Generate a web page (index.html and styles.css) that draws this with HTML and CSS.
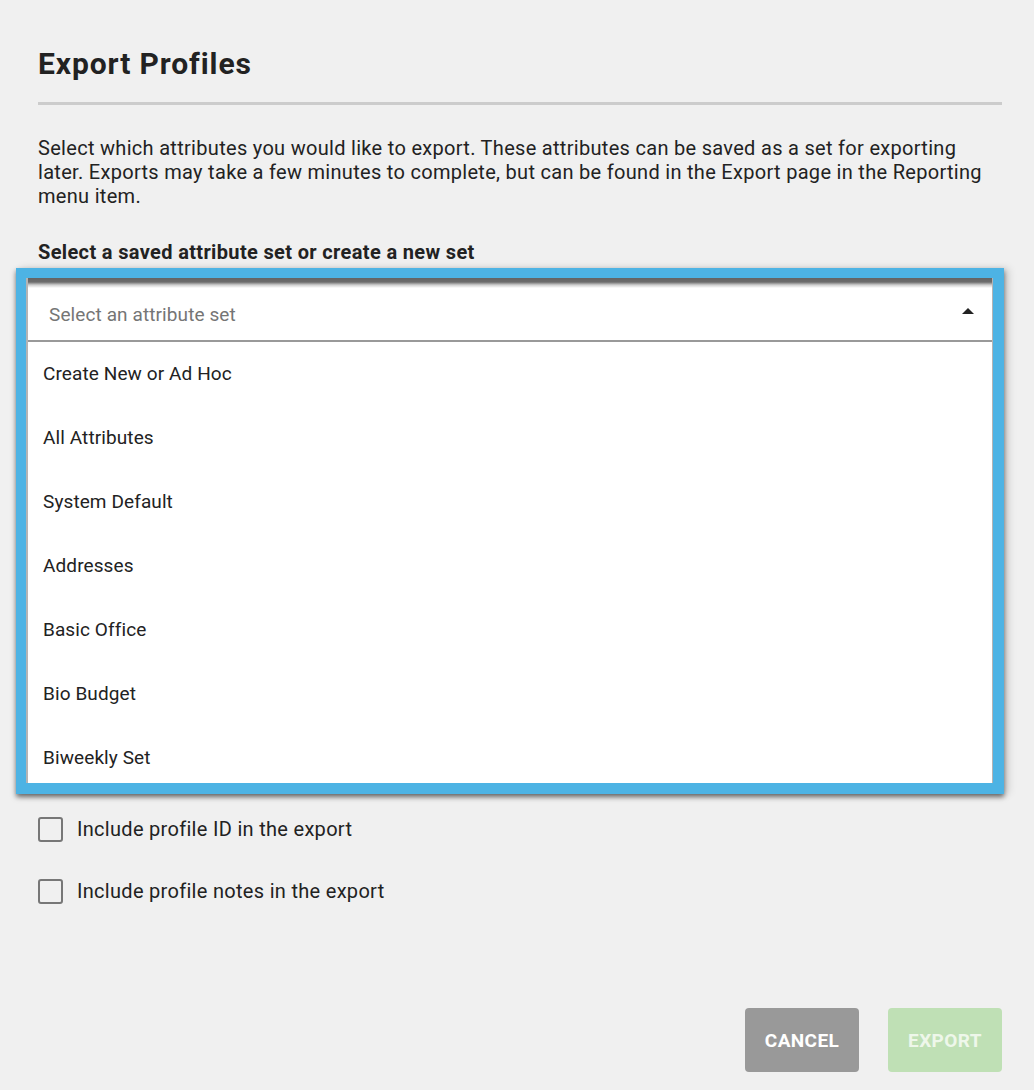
FILE: index.html
```html
<!DOCTYPE html>
<html>
<head>
  <meta charset="UTF-8">
  <title>Export Profiles</title>
  <link rel="stylesheet" href="styles.css">
</head>
<body>
<div class="dialog">
  <h1 class="title">Export Profiles</h1>
  <hr class="rule">
  <p class="intro">Select which attributes you would like to export. These attributes can be saved as a set for exporting later. Exports may take a few minutes to complete, but can be found in the Export page in the Reporting menu item.</p>
  <div class="field-label">Select a saved attribute set or create a new set</div>

  <div class="highlight">
    <div class="picker">
      <div class="picker-input">
        <span class="placeholder">Select an attribute set</span>
        <span class="caret"></span>
      </div>
      <ul class="menu">
        <li>Create New or Ad Hoc</li>
        <li>All Attributes</li>
        <li>System Default</li>
        <li>Addresses</li>
        <li>Basic Office</li>
        <li>Bio Budget</li>
        <li>Biweekly Set</li>
      </ul>
    </div>
  </div>

  <div class="options">
    <label class="check"><span class="box"></span>Include profile ID in the export</label>
    <label class="check"><span class="box"></span>Include profile notes in the export</label>
  </div>

  <div class="actions">
    <button type="button" class="btn btn-cancel">CANCEL</button>
    <button type="button" class="btn btn-export">EXPORT</button>
  </div>
</div>
</body>
</html>
```

FILE: styles.css
```css
body {
  margin: 0;
  background: #f0f0f0;
  font-family: Roboto, "Liberation Sans", sans-serif;
  color: #222;
}

.dialog {
  padding: 46px 32px 0 38px;
}

.title {
  margin: 0;
  font-size: 30px;
  line-height: 36px;
  font-weight: 700;
  letter-spacing: .9px;
}

.rule {
  margin: 20px 0 0 0;
  border: 0;
  height: 3px;
  background: #cccccc;
}

.intro {
  margin: 31px 0 0 0;
  font-size: 20px;
  line-height: 24px;
  letter-spacing: .3px;
}

.field-label {
  margin-top: 32px;
  font-size: 20px;
  line-height: 24px;
  font-weight: 700;
  letter-spacing: .35px;
}

/* the opened dropdown, outlined in blue */
.highlight {
  margin: 4px -2px 0 -22px;
  border-style: solid;
  border-color: #4db3e4;
  border-width: 10px 11px 11px 10px;
  box-shadow: 0 3px 5px rgba(0, 0, 0, .55), 5px 0 8px rgba(0, 0, 0, .12);
}

.picker {
  height: 505px;
  overflow: hidden;
  background: #fff;
  border-left: 2px solid #b4b4b4;
  border-right: 1px solid #b4b4b4;
}

.picker-input {
  position: relative;
  height: 62px;
  padding-left: 21px;
  display: flex;
  align-items: center;
  border-bottom: 2px solid #999;
  background: linear-gradient(to bottom, #646464 0, #6c6c6c 4px, #cfcfcf 7px, #fff 10px);
}

.placeholder {
  font-size: 19px;
  letter-spacing: .1px;
  color: #757575;
  padding-top: 10px;
}

.caret {
  position: absolute;
  right: 18px;
  top: 30px;
  width: 0;
  height: 0;
  border-left: 6px solid transparent;
  border-right: 6px solid transparent;
  border-bottom: 6px solid #222;
}

.menu {
  list-style: none;
  margin: 0;
  padding: 0;
}

.menu li {
  height: 64px;
  line-height: 64px;
  padding-left: 15px;
  font-size: 19px;
  letter-spacing: .1px;
  color: #222;
}

.options {
  margin-top: 23px;
}

.check {
  display: flex;
  align-items: center;
  height: 24px;
  margin-bottom: 38px;
  font-size: 20px;
  letter-spacing: .3px;
  color: #222;
}

.check .box {
  width: 21px;
  height: 21px;
  border: 2px solid #777;
  border-radius: 3px;
  margin-right: 14px;
  box-sizing: content-box;
}

.actions {
  display: flex;
  justify-content: flex-end;
  gap: 29px;
  margin-top: 105px;
}

.btn {
  width: 114px;
  height: 64px;
  border: 0;
  border-radius: 4px;
  font-family: Roboto, "Liberation Sans", sans-serif;
  font-size: 19px;
  font-weight: 700;
  letter-spacing: .4px;
  color: #fff;
  cursor: pointer;
}

.btn-cancel {
  background: #999999;
}

.btn-export {
  background: #bfe0b5;
  color: #eef7ea;
}
```
